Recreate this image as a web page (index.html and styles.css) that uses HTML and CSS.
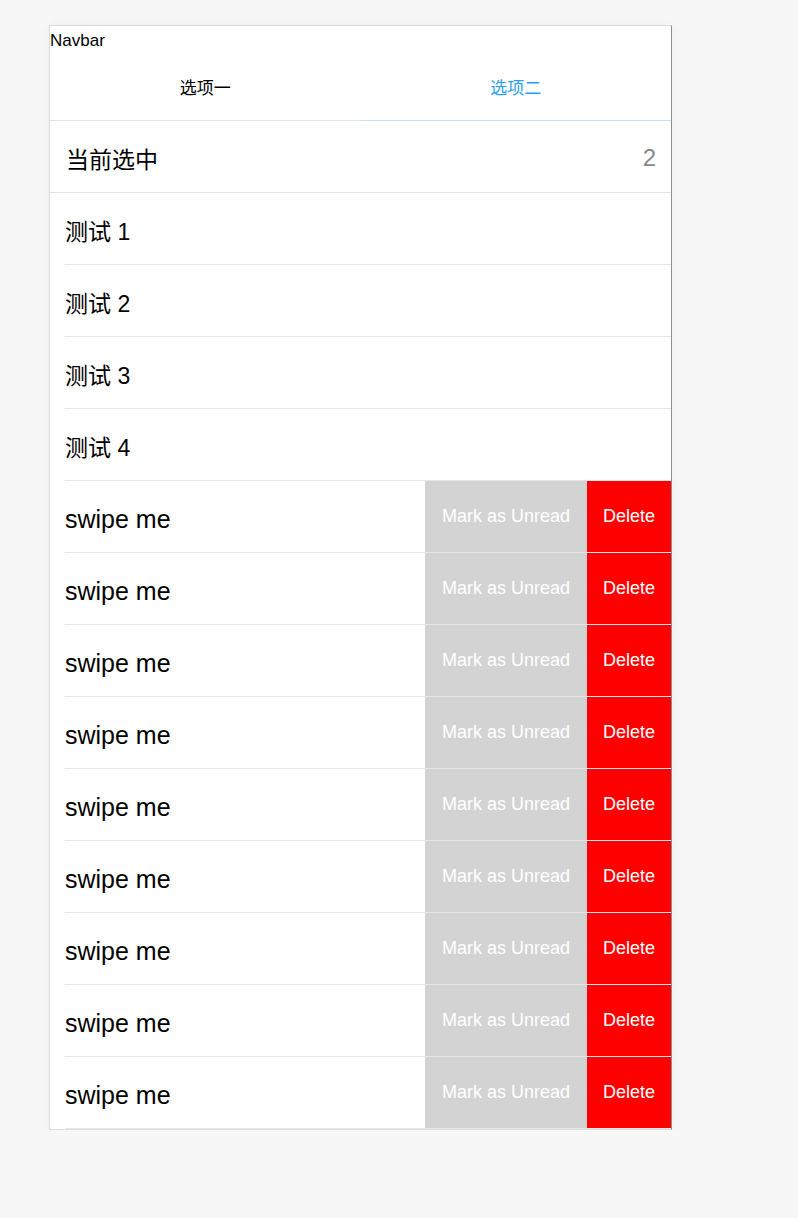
FILE: index.html
```html
<!DOCTYPE html>
<html lang="zh-CN">
<head>
<meta charset="UTF-8">
<meta name="viewport" content="width=device-width, initial-scale=1.0">
<title>Navbar</title>
<link rel="stylesheet" href="styles.css">
</head>
<body>
<div class="phone">
<div class="navbar">Navbar</div>
<div class="tabs">
<div class="tab">选项一</div>
<div class="tab active">选项二</div>
</div>
<div class="current">
<span>当前选中</span>
<span class="value">2</span>
</div>
<div class="list">
<div class="cell"><div class="cell-inner"><span class="label">测试 1</span></div></div>
<div class="cell"><div class="cell-inner"><span class="label">测试 2</span></div></div>
<div class="cell"><div class="cell-inner"><span class="label">测试 3</span></div></div>
<div class="cell"><div class="cell-inner"><span class="label">测试 4</span></div></div>
<div class="cell swipe"><div class="cell-inner"><span class="label">swipe me</span><div class="actions"><div class="btn mark">Mark as Unread</div><div class="btn delete">Delete</div></div></div></div>
<div class="cell swipe"><div class="cell-inner"><span class="label">swipe me</span><div class="actions"><div class="btn mark">Mark as Unread</div><div class="btn delete">Delete</div></div></div></div>
<div class="cell swipe"><div class="cell-inner"><span class="label">swipe me</span><div class="actions"><div class="btn mark">Mark as Unread</div><div class="btn delete">Delete</div></div></div></div>
<div class="cell swipe"><div class="cell-inner"><span class="label">swipe me</span><div class="actions"><div class="btn mark">Mark as Unread</div><div class="btn delete">Delete</div></div></div></div>
<div class="cell swipe"><div class="cell-inner"><span class="label">swipe me</span><div class="actions"><div class="btn mark">Mark as Unread</div><div class="btn delete">Delete</div></div></div></div>
<div class="cell swipe"><div class="cell-inner"><span class="label">swipe me</span><div class="actions"><div class="btn mark">Mark as Unread</div><div class="btn delete">Delete</div></div></div></div>
<div class="cell swipe"><div class="cell-inner"><span class="label">swipe me</span><div class="actions"><div class="btn mark">Mark as Unread</div><div class="btn delete">Delete</div></div></div></div>
<div class="cell swipe"><div class="cell-inner"><span class="label">swipe me</span><div class="actions"><div class="btn mark">Mark as Unread</div><div class="btn delete">Delete</div></div></div></div>
<div class="cell swipe"><div class="cell-inner"><span class="label">swipe me</span><div class="actions"><div class="btn mark">Mark as Unread</div><div class="btn delete">Delete</div></div></div></div>
</div>
</div>
</body>
</html>
```
FILE: styles.css
```css
body {
font-family: 'Liberation Sans', 'Noto Sans CJK SC', sans-serif;
background-color: #f7f7f7;
margin: 0;
padding: 25px 0 0 49px;
color: #000;
}

.phone {
width: 621px;
background-color: #fff;
border: 1px solid #dcdcdc;
border-right-color: #8e8e8e;
box-shadow: 0 0 12px rgba(0, 0, 0, 0.04);
}

.navbar {
font-size: 17px;
line-height: 29px;
}

.tabs {
display: flex;
height: 66px;
}

.tab {
flex: 1;
display: flex;
align-items: center;
justify-content: center;
padding-bottom: 2px;
font-size: 17px;
border-bottom: 1px solid #e3e3e3;
}

.tab.active {
color: #2b9ff2;
border-bottom-color: #cde2ef;
}

.current {
display: flex;
align-items: center;
justify-content: space-between;
height: 72px;
padding: 2px 15px 0 16px;
box-sizing: border-box;
font-size: 23px;
border-bottom: 1px solid #e3e3e3;
}

.current .value {
color: #888;
font-size: 24px;
}

.cell {
padding-left: 15px;
}

.cell-inner {
display: flex;
align-items: center;
height: 71px;
border-bottom: 1px solid #e6e6e6;
}

.label {
flex: 1;
padding-top: 2px;
font-size: 23px;
}

.swipe .label {
padding-top: 5px;
font-size: 25px;
}

.actions {
display: flex;
align-self: stretch;
}

.btn {
display: flex;
align-items: center;
justify-content: center;
color: #fff;
font-size: 18px;
}

.btn.mark {
width: 162px;
background-color: #d3d3d3;
}

.btn.delete {
width: 84px;
background-color: #ff0000;
}
```
